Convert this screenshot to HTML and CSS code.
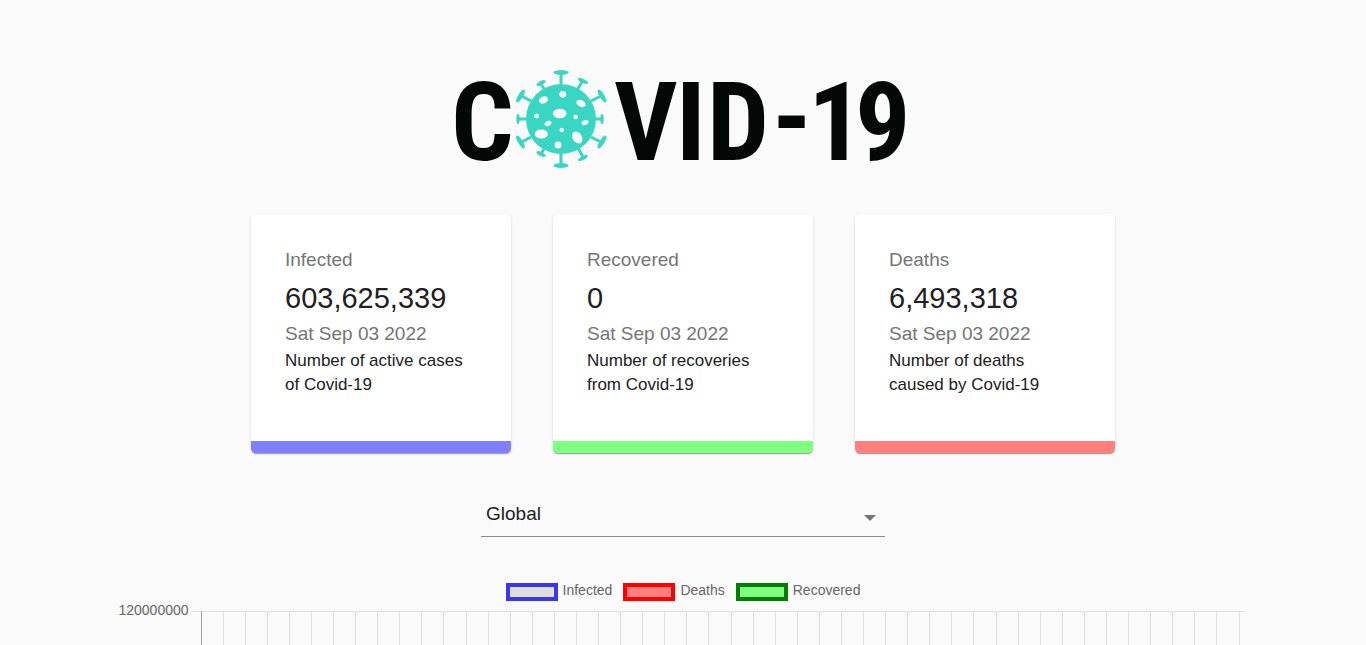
FILE: index.html
```html
<!DOCTYPE html>
<html lang="en">
<head>
<meta charset="utf-8">
<title>COVID-19 Tracker</title>
<link rel="stylesheet" href="styles.css">
</head>
<body>
<main class="page">
  <h1 class="brand">
    <svg class="logo" viewBox="460 70 446 98" role="img" aria-label="COVID-19">
      <g class="logo-text">
        <text x="451 614 676 707 772 808 855" y="160 160 160 160 155 160 160">CVID-19</text>
      </g>
      <g class="virus">
        <circle cx="561" cy="119" r="35"/>
        <g class="spikes">
          <path d="M561 86V72M561 152V166M529 119H519M593 119H601M531 101L520 95M591 101L603 95M531 137L520 143M591 137L603 143M544 89L541 84M577 90L582 82M544 149L541 154M578 148L583 157"/>
        </g>
        <ellipse cx="561" cy="72.500" rx="7.500" ry="2.500"/>
        <ellipse cx="561" cy="165.500" rx="7.500" ry="2.500"/>
        <ellipse cx="518" cy="119" rx="1.700" ry="5"/>
        <ellipse cx="602" cy="119" rx="1.700" ry="5"/>
        <ellipse cx="520.500" cy="96" rx="2.400" ry="7.500" transform="rotate(32 520.500 96)"/>
        <ellipse cx="602" cy="96" rx="2.400" ry="7.500" transform="rotate(-32 602 96)"/>
        <ellipse cx="520.500" cy="142" rx="2.400" ry="7.500" transform="rotate(-32 520.500 142)"/>
        <ellipse cx="602" cy="142" rx="2.400" ry="7.500" transform="rotate(32 602 142)"/>
        <ellipse cx="541" cy="83" rx="5" ry="2" transform="rotate(-28 541 83)"/>
        <ellipse cx="583" cy="81" rx="5.500" ry="2" transform="rotate(25 583 81)"/>
        <ellipse cx="541" cy="154" rx="5" ry="2" transform="rotate(28 541 154)"/>
        <ellipse cx="583" cy="158" rx="5.500" ry="2" transform="rotate(-28 583 158)"/>
        <g class="spots">
          <ellipse cx="543.500" cy="100" rx="4.800" ry="3.500" transform="rotate(-22 543.500 100)"/>
          <circle cx="562.700" cy="94.300" r="3.400"/>
          <ellipse cx="581" cy="103.500" rx="5" ry="3.300" transform="rotate(25 581 103.500)"/>
          <ellipse cx="559.700" cy="113.500" rx="6.800" ry="4.800"/>
          <circle cx="536.500" cy="116" r="2.400"/>
          <circle cx="575.700" cy="117" r="2.300"/>
          <ellipse cx="548" cy="123.500" rx="3.500" ry="2.500" transform="rotate(-25 548 123.500)"/>
          <ellipse cx="585" cy="122.500" rx="3.500" ry="2.500" transform="rotate(-20 585 122.500)"/>
          <circle cx="561.700" cy="130" r="2.300"/>
          <ellipse cx="541.300" cy="134" rx="6.600" ry="4.600"/>
          <ellipse cx="577.300" cy="137.500" rx="4.600" ry="6.500" transform="rotate(-32 577.300 137.500)"/>
          <circle cx="558" cy="145" r="3.400"/>
        </g>
      </g>
    </svg>
  </h1>

  <section class="cards" aria-label="Summary">
    <article class="card card-infected">
      <p class="card-label">Infected</p>
      <h2 class="card-value">603,625,339</h2>
      <p class="card-date">Sat Sep 03 2022</p>
      <p class="card-note">Number of active cases of Covid-19</p>
    </article>
    <article class="card card-recovered">
      <p class="card-label">Recovered</p>
      <h2 class="card-value">0</h2>
      <p class="card-date">Sat Sep 03 2022</p>
      <p class="card-note">Number of recoveries from Covid-19</p>
    </article>
    <article class="card card-deaths">
      <p class="card-label">Deaths</p>
      <h2 class="card-value">6,493,318</h2>
      <p class="card-date">Sat Sep 03 2022</p>
      <p class="card-note">Number of deaths caused by Covid-19</p>
    </article>
  </section>

  <div class="picker">
    <select class="picker-select" aria-label="Country">
      <option>Global</option>
    </select>
    <svg class="picker-arrow" viewBox="0 0 12 6" aria-hidden="true"><path d="M0 0h12L6 6z"/></svg>
  </div>

  <section class="chart" aria-label="Daily figures">
    <ul class="legend">
      <li class="legend-item"><span class="swatch swatch-infected"></span>Infected</li>
      <li class="legend-item"><span class="swatch swatch-deaths"></span>Deaths</li>
      <li class="legend-item"><span class="swatch swatch-recovered"></span>Recovered</li>
    </ul>
    <div class="plot">
      <span class="tick">120000000</span>
      <div class="grid">
        <svg class="grid-lines" id="grid-lines" aria-hidden="true"></svg>
      </div>
    </div>
  </section>
</main>
<script src="chart.js"></script>
</body>
</html>
```
FILE: styles.css
```css
* {
  box-sizing: border-box;
}

body {
  margin: 0;
  background: #fafafa;
  color: #212121;
  font-family: "Liberation Sans", Arial, sans-serif;
}

h1, h2, p, ul {
  margin: 0;
  padding: 0;
  font-weight: 400;
}

.page {
  display: flex;
  flex-direction: column;
  align-items: center;
  min-height: 100vh;
  padding-top: 70px;
}

.brand {
  display: flex;
  justify-content: center;
  width: 100%;
  margin-bottom: 46px;
}

.logo {
  width: 446px;
  max-width: 90%;
  overflow: visible;
}

.logo-text {
  fill: #050706;
  font-family: "Roboto Condensed", "Liberation Sans Narrow", "Open Sans Condensed", "DejaVu Sans Condensed", sans-serif;
  font-size: 110px;
  font-weight: 700;
}

.virus {
  fill: #38d6c3;
}

.spikes {
  fill: none;
  stroke: #38d6c3;
  stroke-width: 3;
}

.spots {
  fill: #fafafa;
}

.cards {
  display: grid;
  grid-template-columns: repeat(3, 1fr);
  gap: 42px;
  width: 100%;
  max-width: 864px;
}

.card {
  padding: 32px 34px 44px;
  background: #fff;
  border-bottom: 12px solid;
  border-radius: 5px;
  box-shadow: 0 2px 1px -1px rgba(0, 0, 0, 0.2), 0 1px 1px rgba(0, 0, 0, 0.14), 0 1px 3px rgba(0, 0, 0, 0.12);
}

.card-infected {
  border-color: #7f7fff;
}

.card-recovered {
  border-color: #7fff7f;
}

.card-deaths {
  border-color: #ff7f7f;
}

.card-label,
.card-date {
  color: #757575;
  font-size: 19px;
  line-height: 28px;
}

.card-value {
  margin: 5px 0 3px;
  font-size: 29px;
  line-height: 38px;
}

.card-note {
  margin-top: 1px;
  font-size: 17px;
  line-height: 24px;
}

.picker {
  display: grid;
  align-items: center;
  width: 100%;
  max-width: 404px;
  margin: 38px 0 46px;
}

.picker-select {
  grid-area: 1 / 1;
  width: 100%;
  height: 46px;
  padding: 0 32px 0 5px;
  border: 0;
  border-bottom: 1px solid #8c8c8c;
  border-radius: 0;
  background: transparent;
  color: #212121;
  font: 19px "Liberation Sans", Arial, sans-serif;
  appearance: none;
}

.picker-arrow {
  grid-area: 1 / 1;
  justify-self: end;
  width: 12px;
  height: 6px;
  margin: 8px 9px 0 0;
  fill: #757575;
  pointer-events: none;
}

.chart {
  display: flex;
  flex: 1;
  flex-direction: column;
  width: 85%;
  color: #666;
  font-size: 14px;
}

.legend {
  display: flex;
  justify-content: center;
  gap: 11px;
  list-style: none;
}

.legend-item {
  display: flex;
  gap: 5px;
  line-height: 14px;
}

.swatch {
  width: 52px;
  height: 18px;
  border: 4px solid;
}

.swatch-infected {
  border-color: #3a35ee;
  background: #dedede;
}

.swatch-deaths {
  border-color: #f00;
  background: #ff7f7f;
}

.swatch-recovered {
  border-color: #008000;
  background: #7fff7f;
}

.plot {
  display: flex;
  flex: 1;
  gap: 2px;
  padding: 0 19px 0 16px;
}

.tick {
  line-height: 18px;
}

.grid {
  display: flex;
  flex: 1;
  margin-top: 10px;
  padding: 0 6px 0 10px;
  background: linear-gradient(#e3e3e3, #e3e3e3) top / 100% 1px no-repeat;
}

.grid-lines {
  flex: 1;
  contain: size;
  overflow: visible;
}

.grid-line {
  stroke: #e0e0e0;
  shape-rendering: crispEdges;
}

.grid-line-axis {
  stroke: #9e9e9e;
}
```
FILE: chart.js
```js
const COLUMNS = 47;
const svg = document.getElementById("grid-lines");

for (let i = 0; i <= COLUMNS; i++) {
  const line = document.createElementNS("http://www.w3.org/2000/svg", "line");
  const x = (i / COLUMNS) * 100 + "%";
  line.setAttribute("x1", x);
  line.setAttribute("x2", x);
  line.setAttribute("y1", "0");
  line.setAttribute("y2", "100%");
  line.setAttribute("class", i === 0 ? "grid-line grid-line-axis" : "grid-line");
  svg.appendChild(line);
}
```
